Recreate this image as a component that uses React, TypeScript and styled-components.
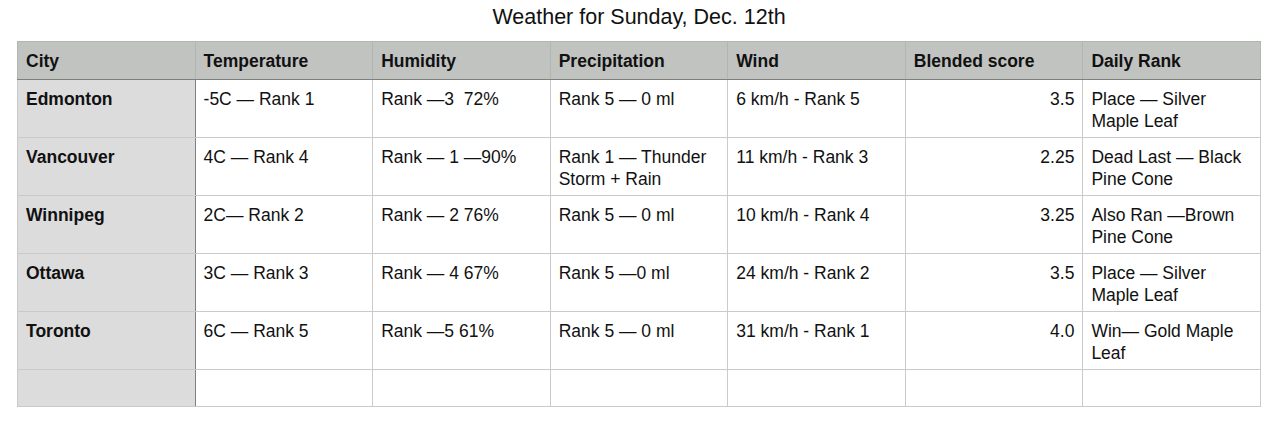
import React from "react";
import styled, { createGlobalStyle } from "styled-components";

const Global = createGlobalStyle`
  html, body { margin: 0; padding: 0; background: #fff; }
  body { font-family: "Liberation Sans", Arial, sans-serif; color: #111; }
`;

const Page = styled.div`
  padding: 4px 17px 0 17px;
  width: 1244px;
`;

const Title = styled.div`
  text-align: center;
  font-size: 21.5px;
  line-height: 26px;
  height: 37px;
  color: #111;
`;

const Table = styled.table`
  border-collapse: collapse;
  table-layout: fixed;
  width: 1244px;
  font-size: 17.5px;
  line-height: 22px;
`;

const HeadCell = styled.th`
  background: #c1c3c1;
  font-weight: bold;
  text-align: left;
  height: 38px;
  padding: 0 8px;
  box-sizing: border-box;
  border: 1px solid #b3b5b3;
  border-bottom: 1px solid #7e807e;
  vertical-align: middle;
`;

const Row = styled.tr<{ $empty?: boolean }>`
  height: ${(p) => (p.$empty ? "37px" : "58px")};
`;

const Cell = styled.td<{ $align?: "left" | "right" }>`
  border: 1px solid #cacaca;
  padding: 8px 8px 0 8px;
  vertical-align: top;
  text-align: ${(p) => p.$align ?? "left"};
  box-sizing: border-box;
  white-space: pre-wrap;
`;

const CityCell = styled(Cell)`
  background: #dcdcdc;
  font-weight: bold;
  border-right: 1px solid #7e807e;
`;

const headers = [
  "City",
  "Temperature",
  "Humidity",
  "Precipitation",
  "Wind",
  "Blended score",
  "Daily Rank",
];

const rows = [
  ["Edmonton", "-5C — Rank 1", "Rank —3  72%", "Rank 5 — 0 ml", "6 km/h - Rank 5", "3.5", "Place — Silver Maple Leaf"],
  ["Vancouver", "4C — Rank 4", "Rank — 1 —90%", "Rank 1 — Thunder Storm + Rain", "11 km/h - Rank 3", "2.25", "Dead Last — Black Pine Cone"],
  ["Winnipeg", "2C— Rank 2", "Rank — 2 76%", "Rank 5 — 0 ml", "10 km/h - Rank 4", "3.25", "Also Ran —Brown Pine Cone"],
  ["Ottawa", "3C — Rank 3", "Rank — 4 67%", "Rank 5 —0 ml", "24 km/h - Rank 2", "3.5", "Place — Silver Maple Leaf"],
  ["Toronto", "6C — Rank 5", "Rank —5 61%", "Rank 5 — 0 ml", "31 km/h - Rank 1", "4.0", "Win— Gold Maple Leaf"],
];

export default function App() {
  return (
    <Page>
      <Global />
      <Title>Weather for Sunday, Dec. 12th</Title>
      <Table>
        <thead>
          <tr>
            {headers.map((h) => (
              <HeadCell key={h}>{h}</HeadCell>
            ))}
          </tr>
        </thead>
        <tbody>
          {rows.map((r) => (
            <Row key={r[0]}>
              <CityCell>{r[0]}</CityCell>
              {r.slice(1).map((c, i) => (
                <Cell key={i} $align={i === 4 ? "right" : "left"}>
                  {c}
                </Cell>
              ))}
            </Row>
          ))}
          <Row $empty>
            <CityCell />
            {[0, 1, 2, 3, 4, 5].map((i) => (
              <Cell key={i} />
            ))}
          </Row>
        </tbody>
      </Table>
    </Page>
  );
}
